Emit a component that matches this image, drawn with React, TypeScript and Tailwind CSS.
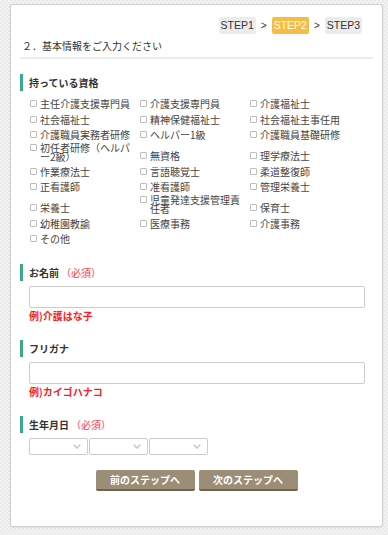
import { ReactNode } from 'react';

const jp = { fontFamily: '"Noto Sans CJK JP", "Liberation Sans", sans-serif' };

// two-line items are broken by hand so they wrap like the original
const qualifications: { label: ReactNode; wrap?: boolean }[] = [
  { label: '主任介護支援専門員' },
  { label: '介護支援専門員' },
  { label: '介護福祉士' },
  { label: '社会福祉士' },
  { label: '精神保健福祉士' },
  { label: '社会福祉主事任用' },
  { label: '介護職員実務者研修' },
  { label: 'ヘルパー1級' },
  { label: '介護職員基礎研修' },
  { label: <>初任者研修（ヘルパ<br />ー2級）</>, wrap: true },
  { label: '無資格' },
  { label: '理学療法士' },
  { label: '作業療法士' },
  { label: '言語聴覚士' },
  { label: '柔道整復師' },
  { label: '正看護師' },
  { label: '准看護師' },
  { label: '管理栄養士' },
  { label: '栄養士' },
  { label: <>児童発達支援管理責<br />任者</>, wrap: true },
  { label: '保育士' },
  { label: '幼稚園教諭' },
  { label: '医療事務' },
  { label: '介護事務' },
  { label: 'その他' },
];

function Heading({ title, required }: { title: string; required?: boolean }) {
  return (
    <div className="flex items-center h-[17px]">
      <div className="w-[3px] h-[17px] bg-[#3aaa8c]" />
      <span className="ml-[6px] text-[10px] font-bold text-[#333] leading-[17px]">{title}</span>
      {required && <span className="ml-[2px] text-[10px] text-[#ff3b3b] leading-[17px]">（必須）</span>}
    </div>
  );
}

function Chevron() {
  return (
    <svg className="w-[8px] h-[5px]" viewBox="0 0 8 5" fill="none" stroke="#c4c4c4" strokeWidth={1.4}>
      <polyline points="0.7,0.7 4,4 7.3,0.7" />
    </svg>
  );
}

export default function App() {
  return (
    <div
      className="w-[388px] h-[535px] pt-[4px] pl-[10px] bg-[#efefef] bg-[repeating-conic-gradient(#e9e9e9_0_25%,#f4f4f4_0_50%)] bg-[length:4px_4px]"
      style={jp}
    >
      <div className="w-[373px] h-[523px] bg-white border border-[#cfcfcf] rounded-[3px] shadow-[0_1px_2px_rgba(0,0,0,0.08)] px-[9px]">
        {/* steps */}
        <div className="mt-[12px] flex justify-end items-center pr-[11px] text-[10.5px] text-[#333]" style={{ fontFamily: '"Liberation Sans", Arial, sans-serif' }}>
          <span className="h-[17px] px-[2px] leading-[17px] bg-[#ececec] rounded-[2px]">STEP1</span>
          <span className="mx-[5px] text-[10px]">&gt;</span>
          <span className="h-[17px] px-[2px] leading-[17px] bg-[#f6bd45] text-white rounded-[2px]">STEP2</span>
          <span className="mx-[5px] text-[10px]">&gt;</span>
          <span className="h-[17px] px-[2px] leading-[17px] bg-[#ececec] rounded-[2px]">STEP3</span>
        </div>

        <div className="mt-[5px] pl-[2px] pb-[4px] border-b-2 border-[#ececec] text-[10px] leading-[14px] text-[#333]">
          ２．基本情報をご入力ください
        </div>

        <div className="mt-[15px]">
          <Heading title="持っている資格" />
        </div>
        <div className="mt-[5px] pl-[10px] grid grid-cols-[110px_110px_110px] items-end text-[10px] text-[#444]">
          {qualifications.map((q, i) => (
            <div key={i} className={`flex items-start whitespace-nowrap ${q.wrap ? 'pb-[2px]' : ''}`}>
              <div className={`flex items-center ${q.wrap ? 'h-[9.5px]' : 'h-[15.5px]'}`}>
                <div className="w-[7px] h-[7px] border border-[#bdbdbd] rounded-[1px] bg-white" />
              </div>
              <span className={`ml-[3px] ${q.wrap ? 'leading-[9.5px]' : 'leading-[15.5px]'}`}>{q.label}</span>
            </div>
          ))}
        </div>

        <div className="mt-[17px]">
          <Heading title="お名前" required />
        </div>
        <div className="ml-[9px] mt-[5px] w-[336px] h-[22px] border border-[#cccccc] rounded-[2px] bg-white" />
        <div className="ml-[9px] mt-[1px] text-[10px] font-bold leading-[14px] text-[#ff1a1a]">例)介護はな子</div>

        <div className="mt-[17px]">
          <Heading title="フリガナ" />
        </div>
        <div className="ml-[9px] mt-[5px] w-[336px] h-[22px] border border-[#cccccc] rounded-[2px] bg-white" />
        <div className="ml-[9px] mt-[1px] text-[10px] font-bold leading-[14px] text-[#ff1a1a]">例)カイゴハナコ</div>

        <div className="mt-[17px]">
          <Heading title="生年月日" required />
        </div>
        <div className="ml-[9px] mt-[5px] flex gap-[1px]">
          {[0, 1, 2].map((n) => (
            <div key={n} className="w-[59px] h-[17px] border border-[#cccccc] rounded-[2px] bg-white flex items-center justify-end pr-[6px]">
              <Chevron />
            </div>
          ))}
        </div>

        <div className="mt-[15px] flex justify-center gap-[4px]">
          <button className="w-[99px] h-[21px] bg-[#9c8d77] border-b-2 border-[#6f6352] rounded-[2px] text-white text-[10px] font-bold leading-[19px]">
            前のステップへ
          </button>
          <button className="w-[99px] h-[21px] bg-[#9c8d77] border-b-2 border-[#6f6352] rounded-[2px] text-white text-[10px] font-bold leading-[19px]">
            次のステップへ
          </button>
        </div>
      </div>
    </div>
  );
}
